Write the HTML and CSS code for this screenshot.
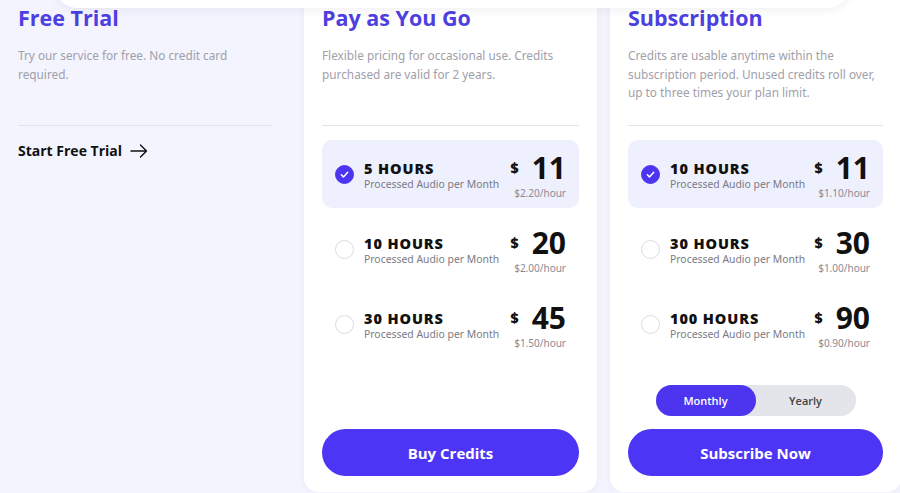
FILE: index.html
```html
<!DOCTYPE html>
<html lang="en">
<head>
    <meta charset="UTF-8">
    <meta name="viewport" content="width=device-width, initial-scale=1.0">
    <title>Pricing</title>
    <link rel="stylesheet" href="styles.css">
</head>
<body>

    <!-- sticky nav, scrolled mostly out of view -->
    <div class="nav-bar"></div>

    <div class="plans">

        <!-- Free trial -->
        <div class="plan plan-free">
            <div class="plan-head">
                <h2>Free Trial</h2>
                <p>Try our service for free. No credit card required.</p>
            </div>
            <a class="trial-link" href="#">Start Free Trial
                <svg width="18" height="14" viewBox="0 0 18 14" fill="none" stroke="#111" stroke-width="1.4" stroke-linecap="round" stroke-linejoin="round">
                    <path d="M1 7h15.5M10.5 1l6 6-6 6"/>
                </svg>
            </a>
        </div>

        <!-- Pay as you go -->
        <div class="plan card">
            <div class="plan-head">
                <h2>Pay as You Go</h2>
                <p>Flexible pricing for occasional use. Credits purchased are valid for 2 years.</p>
            </div>
            <div class="options" id="payOptions"></div>
            <button class="main-btn">Buy Credits</button>
        </div>

        <!-- Subscription -->
        <div class="plan card">
            <div class="plan-head">
                <h2>Subscription</h2>
                <p>Credits are usable anytime within the subscription period. Unused credits roll over, up to three times your plan limit.</p>
            </div>
            <div class="options" id="subOptions"></div>
            <div class="period-toggle">
                <button class="period active">Monthly</button>
                <button class="period">Yearly</button>
            </div>
            <button class="main-btn">Subscribe Now</button>
        </div>

    </div>

    <script>
        const payData = [
            { hours: 5, price: 11, rate: '2.20' },
            { hours: 10, price: 20, rate: '2.00' },
            { hours: 30, price: 45, rate: '1.50' },
        ];

        const subData = [
            { hours: 10, price: 11, rate: '1.10' },
            { hours: 30, price: 30, rate: '1.00' },
            { hours: 100, price: 90, rate: '0.90' },
        ];

        function renderOptions(id, items) {
            const box = document.getElementById(id);
            box.innerHTML = '';
            items.forEach((item, i) => {
                const row = document.createElement('div');
                row.className = i === 0 ? 'option selected' : 'option';
                row.innerHTML = `
                    <span class="radio">
                        <svg width="11" height="11" viewBox="0 0 12 12" fill="none" stroke="#fff" stroke-width="1.6" stroke-linecap="round" stroke-linejoin="round"><path d="M2.5 6.2l2.4 2.4 4.6-5"/></svg>
                    </span>
                    <div class="option-text">
                        <div class="hours">${item.hours} HOURS</div>
                        <div class="sub-label">Processed Audio per Month</div>
                    </div>
                    <div class="option-price">
                        <div class="amount"><span class="dollar">$</span><span class="num">${item.price}</span></div>
                        <div class="rate">$${item.rate}/hour</div>
                    </div>
                `;
                row.onclick = () => {
                    box.querySelectorAll('.option').forEach(o => o.classList.remove('selected'));
                    row.classList.add('selected');
                };
                box.appendChild(row);
            });
        }

        renderOptions('payOptions', payData);
        renderOptions('subOptions', subData);

        document.querySelectorAll('.period').forEach(btn => {
            btn.onclick = () => {
                document.querySelectorAll('.period').forEach(b => b.classList.remove('active'));
                btn.classList.add('active');
            };
        });
    </script>

</body>
</html>
```

FILE: styles.css
```css
body {
    margin: 0;
    padding: 0;
    background-color: #f3f4fd;
    font-family: "Noto Sans", "Open Sans", sans-serif;
    overflow: hidden;
}

.nav-bar {
    position: absolute;
    top: -40px;
    left: 55px;
    width: 795px;
    height: 48px;
    background: #fff;
    border-radius: 22px;
    box-shadow: 0 2px 10px rgba(40, 40, 90, 0.07);
    z-index: 10;
}

/* Columns */
.plans {
    display: grid;
    grid-template-columns: 291px 293px 291px;
    gap: 13px;
    margin-top: -20px;
    width: 901px;
}

.plan {
    display: flex;
    flex-direction: column;
    padding: 24px 18px 16px;
}

.card {
    background: #fff;
    border-radius: 14px;
    box-shadow: 0 1px 6px rgba(60, 60, 120, 0.06);
}

.plan-head {
    height: 121px;
    border-bottom: 1px solid #e3e4ea;
    margin-bottom: 14px;
}

.plan-head h2 {
    margin: 0;
    font-family: "Open Sans", sans-serif;
    font-size: 21.5px;
    font-weight: 700;
    line-height: 28px;
    color: #4d3fe0;
}

.plan-head p {
    margin: 14px 0 0;
    font-size: 11.8px;
    line-height: 18.5px;
    color: #a0a0aa;
}

.trial-link {
    display: flex;
    align-items: center;
    gap: 8px;
    margin-top: 1px;
    font-family: "Open Sans", sans-serif;
    font-size: 14px;
    font-weight: 700;
    line-height: 20px;
    color: #111;
    text-decoration: none;
}

/* Options */
.options {
    display: flex;
    flex-direction: column;
    gap: 7px;
}

.option {
    display: flex;
    align-items: center;
    height: 68px;
    padding: 0 13px;
    border-radius: 10px;
    cursor: pointer;
}

.option.selected {
    background: #eef0fd;
}

.radio {
    width: 17px;
    height: 17px;
    border-radius: 50%;
    border: 1px solid #dcdce2;
    background: #fff;
    display: flex;
    align-items: center;
    justify-content: center;
    flex-shrink: 0;
}

.radio svg {
    display: none;
}

.option.selected .radio {
    background: #4d35f0;
    border-color: #4d35f0;
}

.option.selected .radio svg {
    display: block;
}

.option-text {
    margin-left: 10px;
    padding-top: 3px;
    flex: 1;
}

.hours {
    font-family: "Open Sans", sans-serif;
    font-size: 14.5px;
    font-weight: 800;
    letter-spacing: 0.9px;
    line-height: 16px;
    color: #111;
}

.sub-label {
    font-size: 10.4px;
    line-height: 14px;
    color: #7a7a84;
}

.option-price {
    text-align: right;
    padding-top: 4px;
}

.amount {
    display: flex;
    align-items: center;
    justify-content: flex-end;
    gap: 13px;
    height: 30px;
}

.dollar {
    font-family: "Open Sans", sans-serif;
    font-size: 14px;
    font-weight: 800;
    line-height: 16px;
    color: #111;
}

.num {
    font-family: "Open Sans", sans-serif;
    font-size: 30px;
    font-weight: 700;
    line-height: 30px;
    color: #111;
}

.rate {
    font-size: 10px;
    line-height: 12px;
    color: #8a8a94;
    margin-top: 4px;
}

/* Monthly / Yearly */
.period-toggle {
    display: flex;
    width: 200px;
    height: 31px;
    margin: 27px auto 0;
    background: #e4e5ea;
    border-radius: 16px;
}

.period {
    flex: 1;
    border: none;
    background: transparent;
    border-radius: 16px;
    font-family: "Open Sans", sans-serif;
    font-size: 11px;
    font-weight: 600;
    color: #444;
    cursor: pointer;
}

.period.active {
    background: #4d35f0;
    color: #fff;
}

.main-btn {
    margin-top: auto;
    height: 47px;
    border: none;
    border-radius: 24px;
    background: #4d35f5;
    color: #fff;
    font-family: "Open Sans", sans-serif;
    font-size: 15px;
    font-weight: 700;
    cursor: pointer;
}

.period-toggle + .main-btn {
    margin-top: 13px;
}

.main-btn:hover {
    background: #3f28e0;
}
```
